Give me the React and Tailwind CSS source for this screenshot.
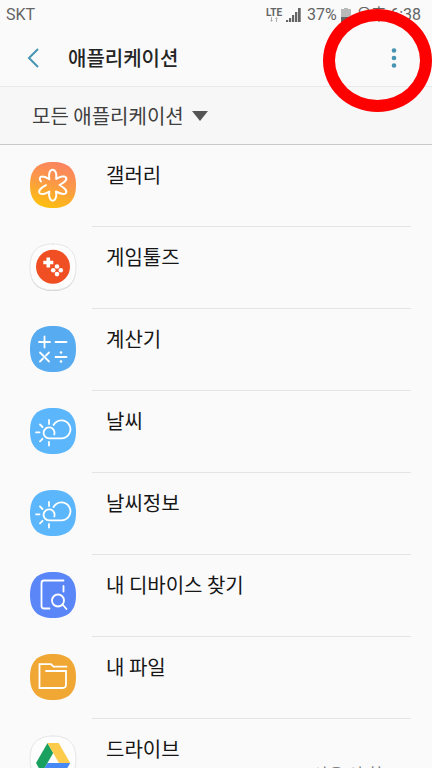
import { useState } from 'react';

const SQUIRCLE = 'M23 0C38.500 0 46 7.500 46 23S38.500 46 23 46 0 38.500 0 23 7.500 0 23 0Z';

function Tile({ fill, outlined, children }) {
  return (
    <svg
      viewBox="0 0 46 46"
      className="w-[46px] h-[46px] shrink-0 overflow-visible"
      fill="none"
      stroke="white"
      strokeWidth="1.8"
      strokeLinecap="round"
      strokeLinejoin="round"
      aria-hidden="true"
    >
      {outlined && <path d={SQUIRCLE} transform="translate(0 1)" fill="#d2d2d2" stroke="none" />}
      <path d={SQUIRCLE} fill={fill} stroke={outlined ? '#e6e6e6' : 'none'} strokeWidth="1" />
      {children}
    </svg>
  );
}

function GalleryIcon() {
  return (
    <Tile fill="url(#gallery)">
      <defs>
        <linearGradient id="gallery" x1="0.65" y1="0" x2="0.35" y2="1">
          <stop offset="0" stopColor="#fb8360" />
          <stop offset="0.45" stopColor="#fb9848" />
          <stop offset="1" stopColor="#fdc00c" />
        </linearGradient>
      </defs>
      <path
        strokeWidth="2"
        d="M11 19.500C9 17 9.500 14.500 12.500 14.500C15 14.500 17 15.500 19.300 17.300C18.500 12 19.500 7.700 22.500 7.700S27 12 26.200 17C30 14.500 34.500 13.500 36 15.500C37.500 18 34 20.500 29.500 23C34 25.500 37.500 28.500 36 31C34.500 33 30 31.500 26 29.500C27 34 25.500 38.700 22.700 38.700S18.500 34 19.300 29.500C15.500 32 11 33 9.500 31C8 28.500 11.500 25.500 16 23.200"
      />
    </Tile>
  );
}

function GameToolsIcon() {
  return (
    <Tile fill="#fdfdfd" outlined>
      <circle cx="23" cy="22.700" r="17" fill="#f04e23" stroke="none" />
      <path d="M18.300 13.500V23.500M13.300 18.500H23.300" strokeWidth="3.6" strokeLinecap="butt" />
      <g fill="white" stroke="none">
        <circle cx="27" cy="22.500" r="2.300" />
        <circle cx="23.200" cy="26.300" r="2.300" />
        <circle cx="30.800" cy="26.300" r="2.300" />
        <circle cx="27" cy="30.100" r="2.300" />
      </g>
    </Tile>
  );
}

function CalculatorIcon() {
  return (
    <Tile fill="#57abf1">
      <path d="M9 16H20M14.500 10.500V21.500M25.500 16H36.500M25.500 31H36.500M10 26.500L19 35.500M19 26.500L16 29.500M13 32.500L10 35.500" />
      <circle cx="31" cy="26.500" r="1.300" fill="white" stroke="none" />
      <circle cx="31" cy="35.500" r="1.300" fill="white" stroke="none" />
    </Tile>
  );
}

function WeatherIcon() {
  return (
    <Tile fill="#5cb6fb">
      <path d="M24.300 26.500A5.500 5.500 0 1 0 19.300 30.300H32A9 9 0 1 0 23.500 17" />
      <path d="M19 12V16M10 16.500L12.500 19M6 24.300H9.500M10 33.300L12.500 30.800M19 34V37.500" />
    </Tile>
  );
}

function FindDeviceIcon() {
  return (
    <Tile fill="#5a86f8">
      <path d="M33.500 8.500H14Q11.500 8.500 11.500 11V34Q11.500 36.500 14 36.500H19.500M33.500 14V19.500" />
      <circle cx="28" cy="28.500" r="6" />
      <path d="M32.500 32.500L36.500 37" />
    </Tile>
  );
}

function FilesIcon() {
  return (
    <Tile fill="#f1a733">
      <path d="M36.500 12.700H23.500L21 10.200H9.500V34H32.500Q36 34 36 30.500V17H16" strokeLinejoin="miter" />
    </Tile>
  );
}

function DriveIcon() {
  return (
    <Tile fill="#fdfdfd" outlined>
      <g stroke="none">
        <path d="M17.500 7L23.200 17L11.700 37L6 27Z" fill="#1ba15f" />
        <path d="M17.500 7H28.700L40.200 27H28.900Z" fill="#fccb4b" />
        <path d="M17.500 27H40.200L34.500 37H11.700Z" fill="#4688f4" />
      </g>
    </Tile>
  );
}

const APPS = [
  { id: 'gallery', name: '갤러리', Icon: GalleryIcon },
  { id: 'gametools', name: '게임툴즈', Icon: GameToolsIcon },
  { id: 'calculator', name: '계산기', Icon: CalculatorIcon },
  { id: 'weather', name: '날씨', Icon: WeatherIcon },
  { id: 'weatherinfo', name: '날씨정보', Icon: WeatherIcon },
  { id: 'finddevice', name: '내 디바이스 찾기', Icon: FindDeviceIcon },
  { id: 'files', name: '내 파일', Icon: FilesIcon },
  { id: 'drive', name: '드라이브', Icon: DriveIcon, status: '사용 안 함' },
];

function StatusBar() {
  return (
    <div className="flex h-[30px] items-center justify-between pl-[6px] pr-[11px] text-[#646464]">
      <span className="font-['Roboto',sans-serif] text-[16px] leading-[20px]">SKT</span>
      <div className="flex items-center gap-1">
        <div className="flex flex-col items-center">
          <span className="font-['Roboto',sans-serif] text-[10px] leading-[9px] font-bold">LTE</span>
          <svg viewBox="0 0 10 5" className="w-[10px] h-[5px]" fill="#b0b0b0" aria-hidden="true">
            <path d="M1 3L2.500 5L4 3H3V0H2V3ZM6 2L7.500 0L9 2H8V5H7V2Z" />
          </svg>
        </div>
        <svg viewBox="0 0 15 14" className="w-[15px] h-[14px]" fill="#646464" aria-hidden="true">
          <path d="M0 12H2.200V14H0ZM3 10H5.200V14H3ZM6 7H8.200V14H6ZM9 4H11.300V14H9ZM12 0H14.700V14H12Z" />
        </svg>
        <span className="pl-[2px] font-['Roboto',sans-serif] text-[16px] leading-[20px]">37%</span>
        <svg viewBox="0 0 10 14" className="w-[10px] h-[14px]" aria-hidden="true">
          <path d="M3 0H7V1H10V9H0V1H3Z" fill="#b9b9b9" />
          <path d="M0 9H10V14H0Z" fill="#646464" />
        </svg>
        <span className="pl-[2px] font-['Roboto','Noto_Sans_CJK_KR',sans-serif] text-[16px] leading-[20px]">
          오후 6:38
        </span>
      </div>
    </div>
  );
}

function Header() {
  return (
    <header className="flex h-[56px] items-center pl-[24px] pr-[30px]">
      <button type="button" aria-label="뒤로" className="flex w-[18px] h-[40px] items-center justify-center">
        <svg viewBox="0 0 12 20" className="w-[12px] h-[20px]" fill="none" stroke="#4795b3" strokeWidth="2" aria-hidden="true">
          <path d="M11 1L2 10L11 19" />
        </svg>
      </button>
      <h1 className="flex-1 pl-[26px] text-[20px] leading-[30px] font-medium text-[#252525]">애플리케이션</h1>
      <button type="button" aria-label="옵션 더보기" className="flex w-[16px] h-[40px] items-center justify-center">
        <svg viewBox="0 0 6 20" className="w-[6px] h-[20px]" fill="#4795b3" aria-hidden="true">
          <circle cx="3" cy="2.500" r="2.300" />
          <circle cx="3" cy="10" r="2.300" />
          <circle cx="3" cy="17.500" r="2.300" />
        </svg>
      </button>
    </header>
  );
}

function Filter() {
  const [value, setValue] = useState('all');
  return (
    <div className="flex h-[59px] items-center border-t border-b border-t-[#e9e9e9] border-b-[#c8c8c8] bg-[#f7f7f7] pl-[32px]">
      <label className="relative flex items-center">
        <select
          value={value}
          onChange={(e) => setValue(e.target.value)}
          aria-label="애플리케이션 필터"
          className="appearance-none field-sizing-content bg-transparent pr-[24px] text-[20px] leading-[30px] text-[#404040] outline-none"
        >
          <option value="all">모든 애플리케이션</option>
          <option value="enabled">사용 중</option>
          <option value="disabled">사용 안 함</option>
        </select>
        <svg viewBox="0 0 16 10" className="pointer-events-none absolute right-0 w-[16px] h-[10px]" fill="#555555" aria-hidden="true">
          <path d="M0 0H16L8 10Z" />
        </svg>
      </label>
    </div>
  );
}

function AppRow({ app, last }) {
  const { Icon, name, status } = app;
  return (
    <li>
      <button type="button" className="flex h-[82px] w-full items-start pl-[30px] pr-[21px] text-left">
        <span className="pt-[17px]">
          <Icon />
        </span>
        <span className={`ml-4 flex h-full flex-1 flex-col pl-[14px] pt-[15px] ${last ? '' : 'border-b border-[#e4e4e4]'}`}>
          <span className="text-[20px] leading-[30px] text-[#161616]">{name}</span>
          {status && (
            <span className="pr-[28px] text-right text-[17px] leading-[20px] text-[#808080]">{status}</span>
          )}
        </span>
      </button>
    </li>
  );
}

export default function App() {
  return (
    <div className="relative h-screen overflow-hidden bg-[#fafafa] font-['Noto_Sans_CJK_KR',sans-serif]">
      <StatusBar />
      <Header />
      <Filter />
      <ul>
        {APPS.map((app, i) => (
          <AppRow key={app.id} app={app} last={i === APPS.length - 1} />
        ))}
      </ul>
      {/* Highlight around the options button */}
      <div className="pointer-events-none absolute top-[9px] right-0 w-[109px] h-[103px] rounded-[50%] border-[12px] border-[#ff0000]" />
    </div>
  );
}
